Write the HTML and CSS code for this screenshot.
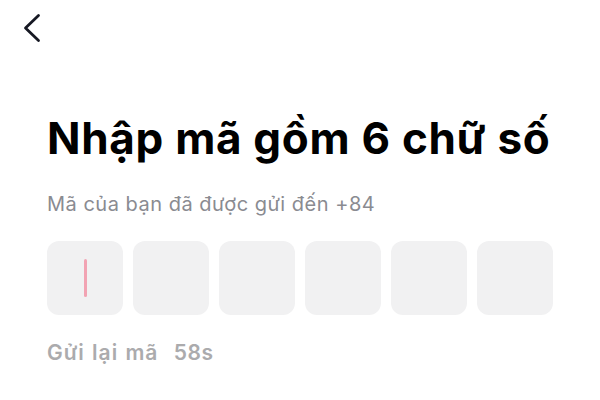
FILE: index.html
```html
<!DOCTYPE html>
<html lang="vi">
<head>
<meta charset="utf-8">
<title>Nhập mã</title>
<link rel="stylesheet" href="styles.css">
</head>
<body>
<div class="screen">
  <header class="topbar">
    <button class="back" aria-label="Quay lại">
      <svg width="20" height="32" viewBox="0 0 20 32" fill="none">
        <path d="M16.5 3.5 L3.5 16 L16.5 28.5" stroke="#161823" stroke-width="2.8" stroke-linecap="round" stroke-linejoin="round"/>
      </svg>
    </button>
  </header>
  <main class="content">
    <h1 class="title">Nhập mã gồm 6 chữ số</h1>
    <p class="subtitle">Mã của bạn đã được gửi đến +84</p>
    <div class="code">
      <div class="cell active"><span class="caret"></span></div>
      <div class="cell"></div>
      <div class="cell"></div>
      <div class="cell"></div>
      <div class="cell"></div>
      <div class="cell"></div>
    </div>
    <p class="resend">Gửi lại mã <span class="timer">58s</span></p>
  </main>
</div>
</body>
</html>
```
FILE: styles.css
```css
html, body {
  margin: 0;
  padding: 0;
  background: #ffffff;
}

.screen {
  width: 600px;
  height: 400px;
  font-family: Inter, "Liberation Sans", Arial, sans-serif;
  color: #161823;
}

.topbar {
  height: 56px;
  padding: 12px 0 0 22px;
  box-sizing: border-box;
}

.back {
  display: block;
  padding: 0;
  border: 0;
  background: none;
  width: 20px;
  height: 32px;
}

.back svg {
  display: block;
}

.content {
  padding: 0 47px;
}

.title {
  margin: 56px 0 0;
  font-size: 44px;
  line-height: 52px;
  font-weight: 700;
  color: #000000;
  letter-spacing: 0.7px;
}

.subtitle {
  margin: 28px 0 0;
  font-size: 20px;
  line-height: 24px;
  color: #8a8b91;
  letter-spacing: 0.5px;
}

.code {
  display: flex;
  gap: 10px;
  margin-top: 25px;
}

.cell {
  width: 76px;
  height: 74px;
  border-radius: 12px;
  background: #f1f1f2;
  display: flex;
  align-items: center;
  justify-content: center;
}

.caret {
  display: block;
  width: 3px;
  height: 38px;
  border-radius: 2px;
  background: #f2a3b3;
}

.resend {
  margin: 26px 0 0;
  font-size: 21px;
  line-height: 24px;
  font-weight: 600;
  color: #ababad;
  letter-spacing: 1px;
  word-spacing: 1px;
}

.timer {
  margin-left: 8px;
  letter-spacing: 0.6px;
}
```
